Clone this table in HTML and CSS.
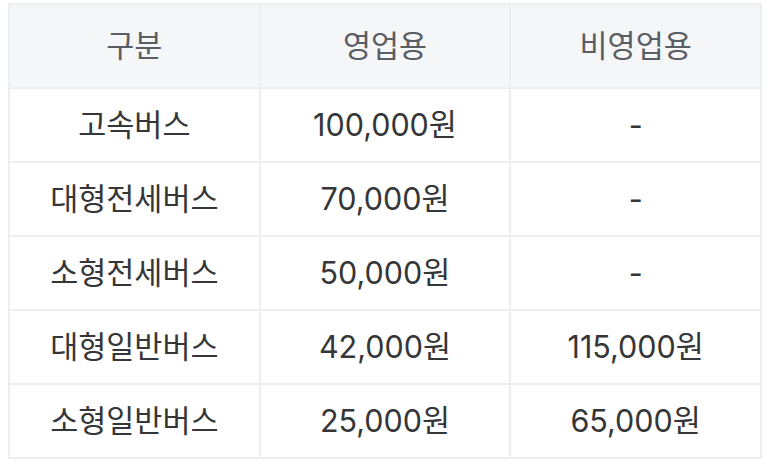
FILE: index.html
```html
<!DOCTYPE html>
<html lang="ko">
<head>
<meta charset="utf-8">
<link rel="stylesheet" href="styles.css">
</head>
<body>
<table class="fare">
  <thead>
    <tr><th>구분</th><th>영업용</th><th>비영업용</th></tr>
  </thead>
  <tbody>
    <tr><td>고속버스</td><td>100,000원</td><td>-</td></tr>
    <tr><td>대형전세버스</td><td>70,000원</td><td>-</td></tr>
    <tr><td>소형전세버스</td><td>50,000원</td><td>-</td></tr>
    <tr><td>대형일반버스</td><td>42,000원</td><td>115,000원</td></tr>
    <tr><td>소형일반버스</td><td>25,000원</td><td>65,000원</td></tr>
  </tbody>
</table>
</body>
</html>
```

FILE: styles.css
```css
html, body {
  margin: 0;
  background: #ffffff;
}
body {
  padding: 3px 8px;
  font-family: Inter, "Noto Sans CJK KR", sans-serif;
}
.fare {
  width: 754px;
  table-layout: fixed;
  border-collapse: collapse;
  border: 2px solid #eceef0;
}
.fare th, .fare td {
  border: 2px solid #eceef0;
  text-align: center;
  vertical-align: middle;
  padding: 0;
  font-size: 30.5px;
  line-height: 1.2;
}
.fare th {
  height: 82px;
  background: #f5f6f8;
  color: #5a5d62;
  font-weight: 400;
}
.fare td {
  height: 72px;
  color: #353638;
}
```
